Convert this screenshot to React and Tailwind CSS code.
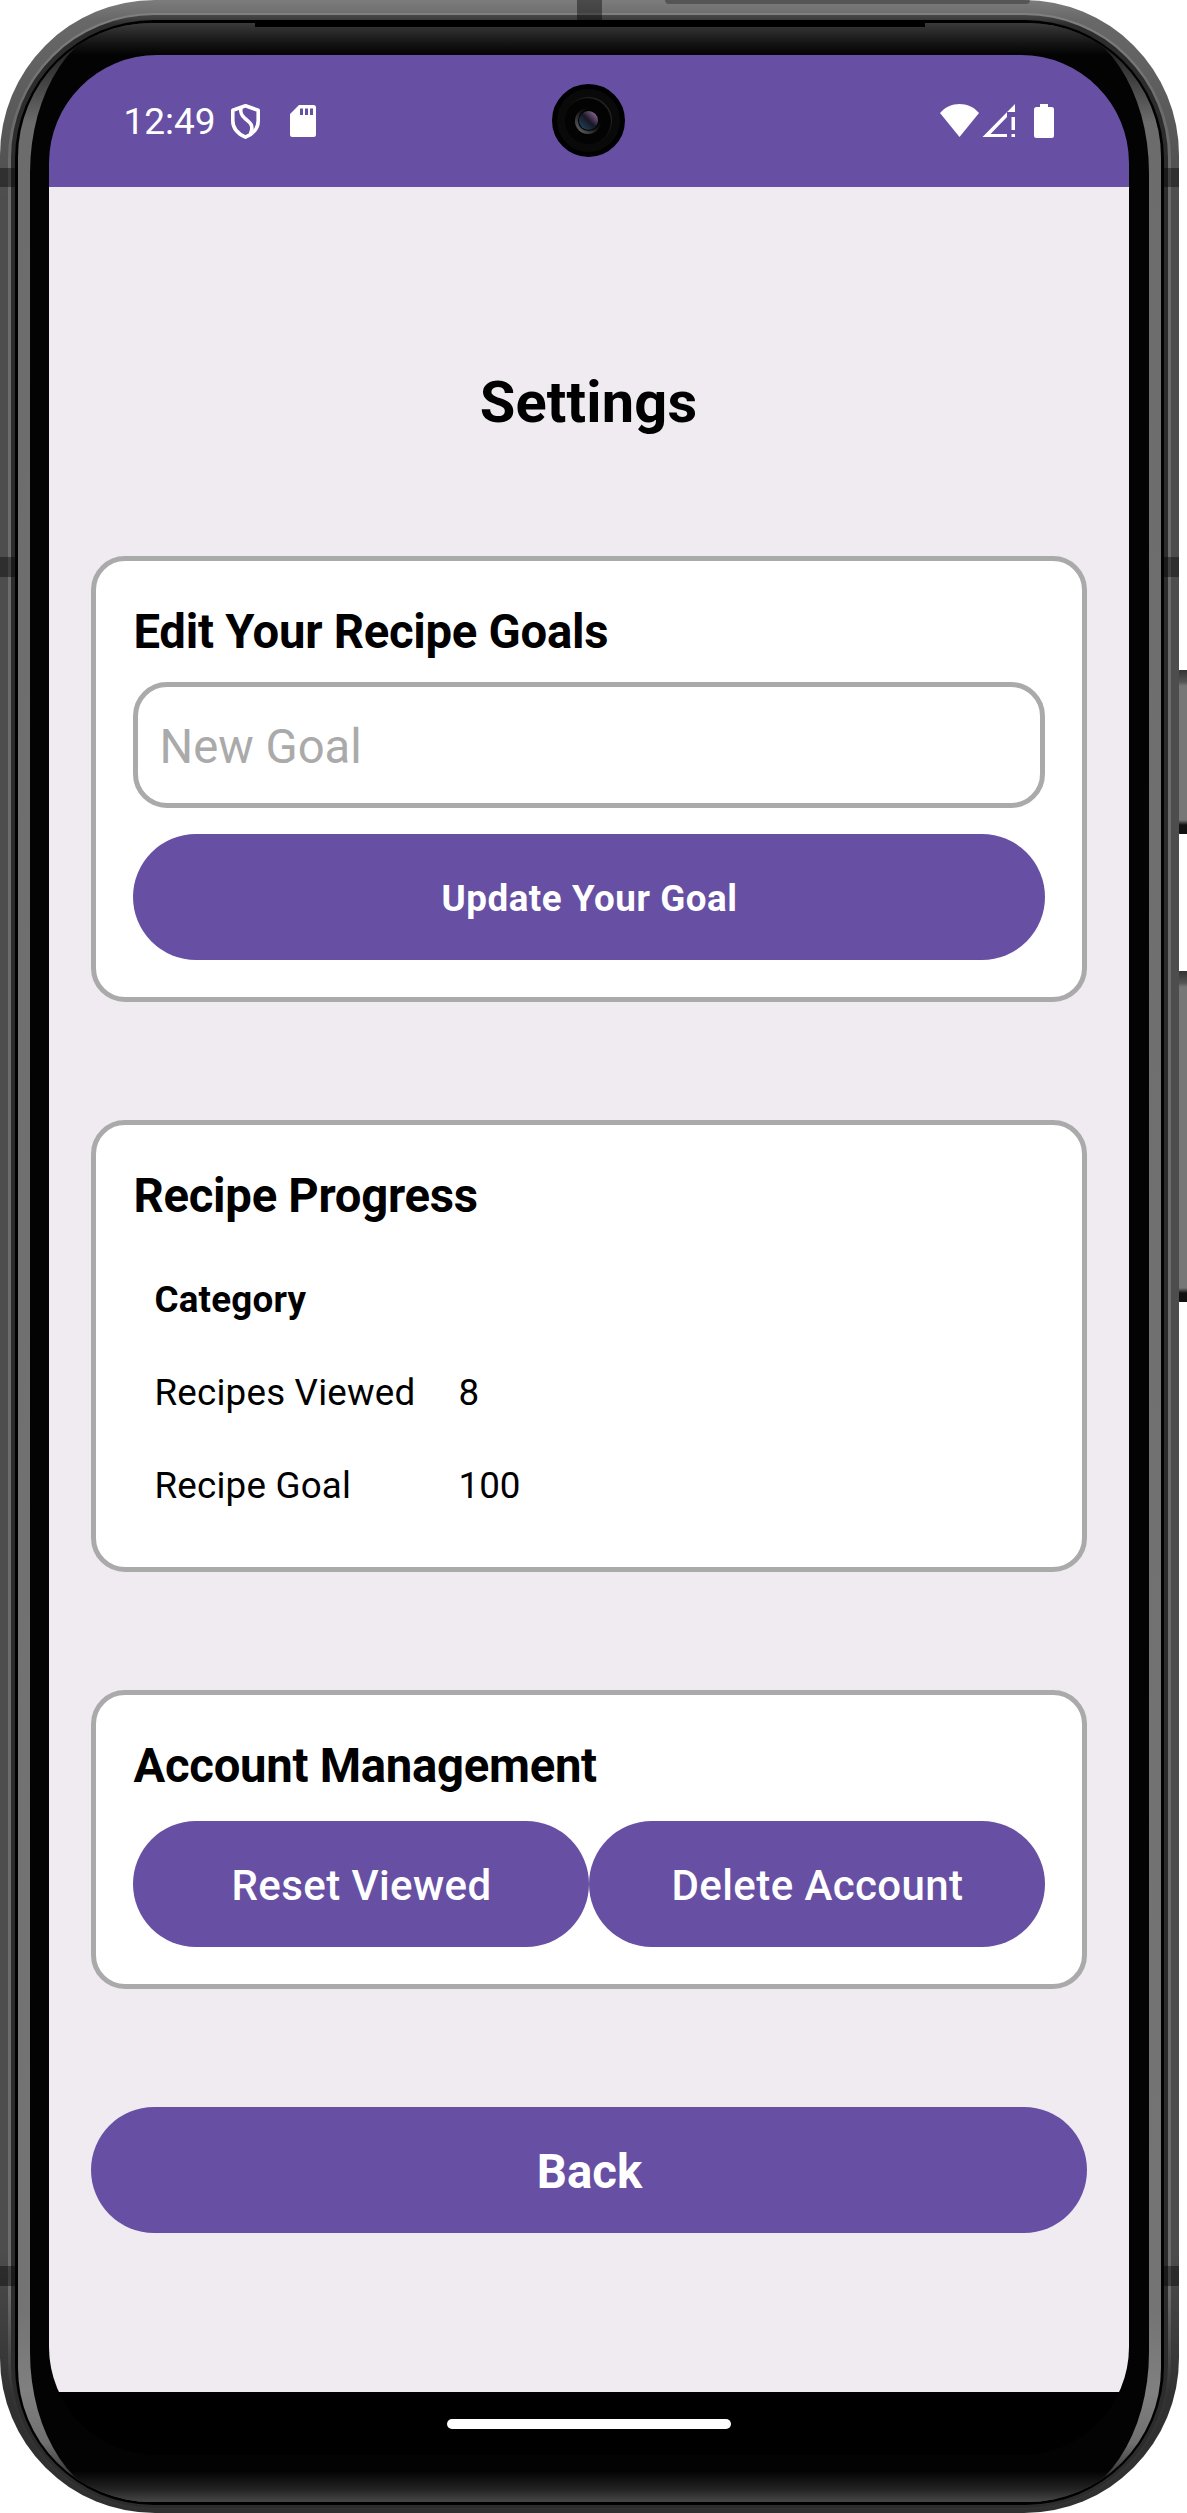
import React from "react";

function Notch({ className }) {
  return <div className={"absolute bg-black/40 " + className} />;
}

function StatusBar() {
  return (
    <header className="relative flex h-[132px] items-center justify-between bg-[#6750a3] pl-[75px] pr-[75px] text-white">
      <div className="flex items-center">
        <span className="w-[93px] pt-[2px] text-[37px] leading-[44px]">12:49</span>
        <svg className="ml-[14px] h-[35px] w-[29px]" viewBox="0 0 29 35" fill="none" stroke="currentColor" strokeWidth="3.6" strokeLinejoin="round">
          <path d="M14.5 1.800 27.200 6.300v10.500c0 7-5 13-12.700 16.400C6.800 29.800 1.800 23.800 1.800 16.800V6.300z" />
          <path d="M10 3.500c-1 5.500 .5 8 4 11 5.500 4.500 9 7 5.500 15" />
        </svg>
        <svg className="ml-[30px] h-[32px] w-[26px]" viewBox="0 0 26 32">
          <path fill="currentColor" fillRule="evenodd" d="M9 0h14.500A2.500 2.500 0 0 1 26 2.500v27A2.500 2.500 0 0 1 23.500 32h-21A2.500 2.500 0 0 1 0 29.500V9zm1 3.500V10h3V3.500zm5 0V10h3V3.500zm5 0V10h3V3.500z" />
        </svg>
      </div>
      <div className="absolute left-[503px] top-[29px] flex size-[73px] items-center justify-center rounded-full border-[5px] border-black bg-[#090909]">
        <div className="flex size-[47px] items-center justify-center rounded-full bg-[#030303] shadow-[inset_-1px_1px_1px_#292929]">
          <div className="flex size-[26px] items-center justify-center rounded-full bg-linear-to-tr from-[#777] via-[#171717] to-black">
            <div className="flex size-[21px] items-center justify-center rounded-full bg-black">
              <div className="size-[19px] rounded-full bg-linear-to-tr from-[#155069] via-[#171725] to-[#b584b8]" />
            </div>
          </div>
        </div>
      </div>
      <svg className="h-[34px] w-[114px]" viewBox="0 0 114 34" fill="currentColor">
        <path d="M0 9C10-3 29-3 39 9L19.500 33z" />
        <path fillRule="evenodd" d="M75 0v8h-8v5L50.500 30H67v3H42.500zM71.500 13H75v13h-3.500zM71.500 30H75v3h-3.500z" />
        <path d="M100 0h8v3h3.500a2.500 2.500 0 0 1 2.500 2.500v26a2.500 2.500 0 0 1-2.500 2.500h-15a2.500 2.500 0 0 1-2.500-2.500v-26A2.500 2.500 0 0 1 96.500 3h3.500z" />
      </svg>
    </header>
  );
}

function Card({ title, className, children }) {
  return (
    <section className={"rounded-[34px] border-[5px] border-[#aaaaaa] bg-white px-[37px] pt-[37px] " + className}>
      <h2 className="mb-[21px] pt-[5px] pl-px text-[47.25px] leading-[58px] font-bold tracking-[-0.27px] whitespace-nowrap">{title}</h2>
      {children}
    </section>
  );
}

function PillButton({ className, children }) {
  return (
    <button className={"flex h-[126px] items-center justify-center rounded-full bg-[#6750a3] pt-[3px] pl-[2px] whitespace-nowrap text-white " + className}>
      {children}
    </button>
  );
}

function Screen() {
  return (
    <div className="-ml-[2px] flex h-[2400px] w-[1080px] flex-col overflow-hidden rounded-[108px] bg-black">
      <StatusBar />
      <main className="flex h-[2205px] flex-col bg-[#f0ebf1] px-[42px]">
        <h1 className="mt-[181px] text-center text-[57.75px] leading-[68px] font-bold tracking-[0.2px]">Settings</h1>
        <Card title="Edit Your Recipe Goals" className="mt-[120px] h-[446px]">
          <input
            placeholder="New Goal"
            className="block h-[126px] w-full rounded-[34px] border-[5px] border-[#aaaaaa] px-[22px] pt-[3px] text-[47.25px] placeholder:text-[#aaaaaa]"
          />
          <PillButton className="mt-[26px] w-full text-[36.75px] font-bold tracking-[0.55px]">Update Your Goal</PillButton>
        </Card>
        <Card title="Recipe Progress" className="mt-[118px] h-[452px]">
          <div className="grid auto-rows-[93px] grid-cols-[304px_1fr] items-center pt-[7px] pl-[22px] text-[36.75px]">
            <span className="col-span-2 font-bold tracking-[0.2px]">Category</span>
            <span className="tracking-[0.2px]">Recipes Viewed</span>
            <span>8</span>
            <span className="tracking-[0.2px]">Recipe Goal</span>
            <span>100</span>
          </div>
        </Card>
        <Card title="Account Management" className="mt-[118px] h-[299px]">
          <div className="flex pt-[5px]">
            <PillButton className="flex-1 text-[42px] font-medium tracking-[0.4px]">Reset Viewed</PillButton>
            <PillButton className="flex-1 text-[42px] font-medium tracking-[0.4px]">Delete Account</PillButton>
          </div>
        </Card>
        <PillButton className="mt-[118px] w-full pt-[5px] text-[47.25px] font-bold">Back</PillButton>
      </main>
      <div className="mx-auto mt-[27px] h-[10px] w-[284px] rounded-full bg-white" />
    </div>
  );
}

export default function App() {
  return (
    <div className="relative h-[2513px] w-[1187px] overflow-hidden bg-white text-black [font-family:Roboto,sans-serif]">
      <div className="absolute top-[670px] right-0 h-[164px] w-[10px] rounded-l-[3px] bg-[linear-gradient(#333_0,#555_12px,#777_16px,#777_150px,#111_155px)]" />
      <div className="absolute top-[971px] right-0 h-[331px] w-[10px] rounded-l-[3px] bg-[linear-gradient(#333_0,#555_12px,#777_16px,#777_317px,#111_322px)]" />
      <div className="relative h-[2513px] w-[1179px] overflow-hidden rounded-[155px] bg-[linear-gradient(#7c7c7c_0,#686868_20px,#4d4d4d_200px,#4d4d4d_2250px,#303030_2400px)] px-[8px] pt-[13px] pb-[4px]">
        <div className="h-full rounded-[146px] bg-[linear-gradient(#808080_0,#6c6c6c_100px,#6c6c6c_2280px,#333_2380px)] px-[3px] pt-[2px] pb-[1px]">
          <div className="h-full rounded-[143px] bg-[linear-gradient(#484848_0,#2c2c2c_10px,#2c2c2c_100%)] px-[4px] pt-[5px] pb-[3px]">
            <div className="h-full rounded-[139px] bg-black px-[3px] pt-[3px] pb-[3px]">
              <div className="h-full overflow-hidden rounded-[134px] bg-[linear-gradient(#3a3a3a_0,#252525_30px,#6c6c6c_100px,#747474_2290px,#808080_2370px,#707070_2420px,#303030_2455px,#444_2478px)] px-[12px]">
                <div className="flex h-full justify-center rounded-[100px/150px] bg-[linear-gradient(#3a3a3a_0,#111_22px,#030303_32px,#030303_2448px,#222_2466px,#444_2478px)] pt-[32px]">
                  <Screen />
                </div>
              </div>
            </div>
          </div>
        </div>
        <div className="absolute top-[23px] left-[255px] h-[4px] w-[670px] bg-black" />
        <Notch className="top-0 left-[577px] h-[20px] w-[25px]" />
        <div className="absolute top-0 left-[665px] h-[4px] w-[365px] rounded-b-full bg-[#555]" />
        <Notch className="top-[168px] left-0 h-[19px] w-[16px]" />
        <Notch className="top-[557px] left-0 h-[20px] w-[16px]" />
        <Notch className="top-[2266px] left-0 h-[20px] w-[16px]" />
        <Notch className="top-[168px] right-0 h-[19px] w-[16px]" />
        <Notch className="top-[557px] right-0 h-[20px] w-[16px]" />
        <Notch className="top-[2266px] right-0 h-[20px] w-[16px]" />
      </div>
    </div>
  );
}
